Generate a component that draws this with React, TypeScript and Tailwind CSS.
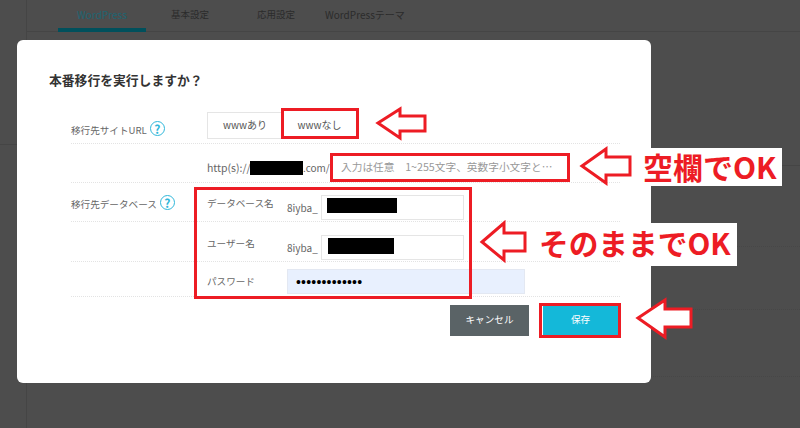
import React from 'react';

const RED = '#ed1c24';

const Help: React.FC = () => (
  <span className="ml-[3px] flex h-[15px] w-[15px] shrink-0 items-center justify-center rounded-full border-[1.5px] border-[#2fb7da] text-[12px] leading-none font-semibold text-[#2fb7da]">
    ?
  </span>
);

const Arrow: React.FC<{ className: string; points: string; fill?: string }> = ({ className, points, fill = 'none' }) => (
  <svg className={className} viewBox="0 0 60 44" fill={fill} stroke={RED} strokeWidth="3" strokeLinejoin="miter">
    <polygon points={points} />
  </svg>
);

const RowLabel: React.FC<{ text: string }> = ({ text }) => (
  <div className="flex w-[136px] shrink-0 items-center self-start text-[9.6px] text-[#666]">
    <span className="pt-[3px]">{text}</span>
    <Help />
  </div>
);

const DbField: React.FC<{ label: string; redact: string }> = ({ label, redact }) => (
  <div className="flex items-center">
    <span className="mb-[8px] w-[80px] shrink-0 text-[9.6px] text-[#666]">{label}</span>
    <span className="w-[34px] shrink-0 text-[10px] text-[#666]">8iyba_</span>
    <div className="flex h-[25px] w-[143px] items-start border border-[#e5e5e5] pt-[2px]">
      <span className={redact} />
    </div>
  </div>
);

export default function App() {
  return (
    <div className="relative h-[428px] w-[800px] overflow-hidden bg-[#4d4d4d] font-['Noto_Sans_CJK_JP',sans-serif]">
      {/* page behind the overlay */}
      <div className="flex h-full">
        <div className="w-[27px] shrink-0 border-r border-[#454545]">
          <div className="h-[145px] border-b border-[#454545]" />
        </div>
        <div className="flex-1">
          <div className="flex h-[32px] items-center border-b border-[#454545] pl-[31px] text-[10px] whitespace-nowrap text-[#2b2b2b]">
            <div className="relative flex h-[32px] w-[88px] items-center justify-center pb-[2px] text-[#1d6572]">
              WordPress
              <span className="absolute right-0 bottom-0 left-0 h-[4px] bg-[#00505c]" />
            </div>
            <span className="ml-[25px] w-[38px] pb-[2px] text-center text-[9.5px]">基本設定</span>
            <span className="ml-[48px] w-[38px] pb-[2px] text-center text-[9.5px]">応用設定</span>
            <span className="ml-[30px] pb-[2px]">WordPressテーマ</span>
          </div>
          <div className="h-[134px] border-b border-[#454545]" />
          <div className="h-[81px] border-b border-dotted border-[#474747]" />
          <div className="h-[63px] border-b border-dotted border-[#474747]" />
          <div className="h-[67px] border-b border-dotted border-[#474747]" />
        </div>
      </div>

      {/* dialog */}
      <div className="absolute top-[40px] left-[17px] flex h-[343px] w-[634px] flex-col rounded-[6px] bg-white pt-[31px] pr-[31px] pl-[32px]">
        <h2 className="text-[12.8px] leading-[18px] font-bold text-[#333]">本番移行を実行しますか？</h2>
        <div className="mt-[15px] pl-[22px]">
          <div className="flex h-[40px] items-start border-b border-dotted border-[#e3e3e3] pt-[8px]">
            <div className="pt-[8px]">
              <RowLabel text="移行先サイトURL" />
            </div>
            <div className="flex h-[27px] text-[10px] text-[#555]">
              <span className="flex w-[75px] items-center justify-center border border-r-0 border-[#e5e5e5] pb-[2px]">wwwあり</span>
              <span className="flex w-[75px] items-center justify-center pb-[2px]">wwwなし</span>
            </div>
          </div>
          <div className="flex h-[39px] items-center border-b border-dotted border-[#e3e3e3] pt-[9px] pl-[136px] text-[#666]">
            <span className="w-[43px] shrink-0 text-[10.5px]">http(s)://</span>
            <span className="h-[14px] w-[53px] shrink-0 bg-black" />
            <span className="w-[38px] shrink-0 text-[10px]">.com/</span>
            <span className="w-[218px] truncate text-[10.7px] text-[#999]">入力は任意　1~255文字、英数字小文字と…</span>
          </div>
          <div className="flex h-[39px] border-b border-dotted border-[#e3e3e3] pt-[11px]">
            <RowLabel text="移行先データベース" />
            <DbField label="データベース名" redact="ml-[5px] block h-[15px] w-[70px] bg-black" />
          </div>
          <div className="flex h-[40px] border-b border-dotted border-[#e3e3e3] pt-[11px] pl-[136px]">
            <DbField label="ユーザー名" redact="ml-[6px] block h-[16px] w-[66px] bg-black" />
          </div>
          <div className="flex h-[35px] items-start border-b border-dotted border-[#e3e3e3] pt-[7px] pl-[136px]">
            <span className="flex h-[25px] w-[80px] shrink-0 items-center text-[9.6px] text-[#666]">パスワード</span>
            <div className="flex h-[25px] w-[238px] items-center border border-[#e3e8f2] bg-[#e8f0fe] pl-[8px] font-['Liberation_Sans',sans-serif] text-[14px] leading-none tracking-[0.2px] text-black">
              •••••••••••••
            </div>
          </div>
          <div className="mt-[8px] flex justify-end gap-[14px] pr-[2px]">
            <button type="button" className="h-[31px] w-[79px] bg-[#5a6366] pb-[2px] text-[9.6px] text-white">
              キャンセル
            </button>
            <button type="button" className="h-[31px] w-[75px] bg-[#14b8d9] pb-[2px] text-[9.6px] text-white">
              保存
            </button>
          </div>
        </div>
      </div>

      {/* red annotations drawn over the screenshot */}
      <div className="absolute top-[108px] left-[281px] h-[31px] w-[78px] border-[3px] border-[#ed1c24]" />
      <div className="absolute top-[153px] left-[330px] h-[29px] w-[240px] border-[3px] border-[#ed1c24]" />
      <div className="absolute top-[187px] left-[194px] h-[112px] w-[278px] border-[3px] border-[#ed1c24]" />
      <div className="absolute top-[303px] left-[539px] h-[35px] w-[82px] border-[3px] border-[#ed1c24]" />

      <Arrow className="absolute top-[104px] left-[372px] h-[44px] w-[60px]" points="6,19 28,5 28,12 53,12 53,27 28,27 28,34" />
      <Arrow className="absolute top-[144px] left-[576px] h-[44px] w-[60px]" points="6,22 30,5 30,13 54,13 54,31 30,31 30,39" />
      <Arrow className="absolute top-[220px] left-[476px] h-[44px] w-[60px]" points="6,22 28,3 28,13 49,13 49,31 28,31 28,40" />
      <Arrow className="absolute top-[297px] left-[633px] h-[44px] w-[60px]" fill="#fff" points="5,21 32,3 32,12 58,12 58,30 32,30 32,40" />

      <div className="absolute top-[148px] left-[651px] h-[38px] w-[131px] bg-white" />
      <div className="absolute top-[223px] left-[651px] h-[43px] w-[86px] bg-white" />
      <span className="absolute top-[145px] left-[643px] text-[30px] leading-[42px] font-bold whitespace-nowrap text-[#ed1c24]">空欄でOK</span>
      <span className="absolute top-[222px] left-[539px] text-[29.7px] leading-[42px] font-bold whitespace-nowrap text-[#ed1c24]">そのままでOK</span>
    </div>
  );
}
